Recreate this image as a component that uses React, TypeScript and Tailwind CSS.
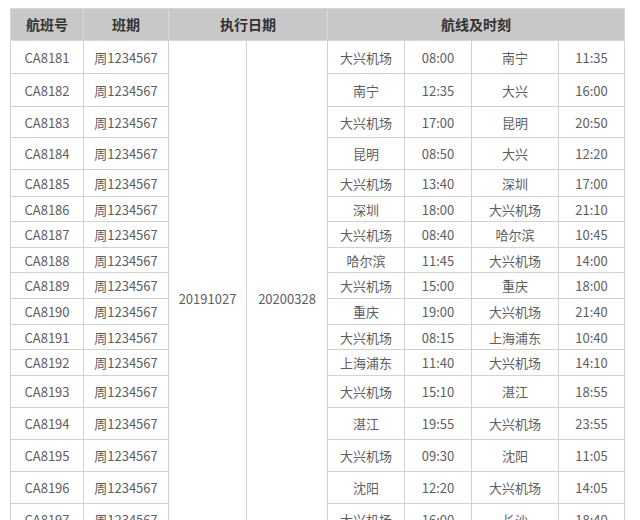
import React from 'react'

type Row = {
  no: string
  h: number
  from: string
  dep: string
  to: string
  arr: string
}

const ROWS: Row[] = [
  { no: 'CA8181', h: 33, from: '大兴机场', dep: '08:00', to: '南宁', arr: '11:35' },
  { no: 'CA8182', h: 33, from: '南宁', dep: '12:35', to: '大兴', arr: '16:00' },
  { no: 'CA8183', h: 31, from: '大兴机场', dep: '17:00', to: '昆明', arr: '20:50' },
  { no: 'CA8184', h: 32, from: '昆明', dep: '08:50', to: '大兴', arr: '12:20' },
  { no: 'CA8185', h: 27, from: '大兴机场', dep: '13:40', to: '深圳', arr: '17:00' },
  { no: 'CA8186', h: 25, from: '深圳', dep: '18:00', to: '大兴机场', arr: '21:10' },
  { no: 'CA8187', h: 26, from: '大兴机场', dep: '08:40', to: '哈尔滨', arr: '10:45' },
  { no: 'CA8188', h: 25, from: '哈尔滨', dep: '11:45', to: '大兴机场', arr: '14:00' },
  { no: 'CA8189', h: 26, from: '大兴机场', dep: '15:00', to: '重庆', arr: '18:00' },
  { no: 'CA8190', h: 26, from: '重庆', dep: '19:00', to: '大兴机场', arr: '21:40' },
  { no: 'CA8191', h: 25, from: '大兴机场', dep: '08:15', to: '上海浦东', arr: '10:40' },
  { no: 'CA8192', h: 26, from: '上海浦东', dep: '11:40', to: '大兴机场', arr: '14:10' },
  { no: 'CA8193', h: 32, from: '大兴机场', dep: '15:10', to: '湛江', arr: '18:55' },
  { no: 'CA8194', h: 32, from: '湛江', dep: '19:55', to: '大兴机场', arr: '23:55' },
  { no: 'CA8195', h: 32, from: '大兴机场', dep: '09:30', to: '沈阳', arr: '11:05' },
  { no: 'CA8196', h: 32, from: '沈阳', dep: '12:20', to: '大兴机场', arr: '14:05' },
  { no: 'CA8197', h: 32, from: '大兴机场', dep: '16:00', to: '长沙', arr: '18:40' },
]

const td = 'border border-[#d2d2d2] text-center align-middle p-0 leading-none'
const th = 'border border-[#d8d8d8] text-center align-middle p-0 font-bold text-[14px] text-[#333]'

export default function App() {
  return (
    <div
      className="h-[520px] overflow-hidden bg-white pt-[8px] pl-[10px]"
      style={{ fontFamily: '"Noto Sans CJK SC", "Noto Sans", sans-serif' }}
    >
      <table className="table-fixed border-collapse w-[614px] text-[13px] text-[#5e5e5e]">
        <colgroup>
          <col className="w-[73px]" />
          <col className="w-[85px]" />
          <col className="w-[78px]" />
          <col className="w-[81px]" />
          <col className="w-[77px]" />
          <col className="w-[67px]" />
          <col className="w-[87px]" />
          <col className="w-[66px]" />
        </colgroup>
        <thead>
          <tr className="h-[32px] bg-[#c8c8c8]">
            <th className={th}>航班号</th>
            <th className={th}>班期</th>
            <th className={th} colSpan={2}>执行日期</th>
            <th className={th} colSpan={4}>航线及时刻</th>
          </tr>
        </thead>
        <tbody>
          {ROWS.map((r, i) => (
            <tr key={r.no} style={{ height: r.h }}>
              <td className={td}>{r.no}</td>
              <td className={td}>周1234567</td>
              {i === 0 && (
                <>
                  <td className={td + ' pt-[21px]'} rowSpan={ROWS.length}>20191027</td>
                  <td className={td + ' pt-[21px]'} rowSpan={ROWS.length}>20200328</td>
                </>
              )}
              <td className={td}>{r.from}</td>
              <td className={td}>{r.dep}</td>
              <td className={td}>{r.to}</td>
              <td className={td}>{r.arr}</td>
            </tr>
          ))}
        </tbody>
      </table>
    </div>
  )
}
